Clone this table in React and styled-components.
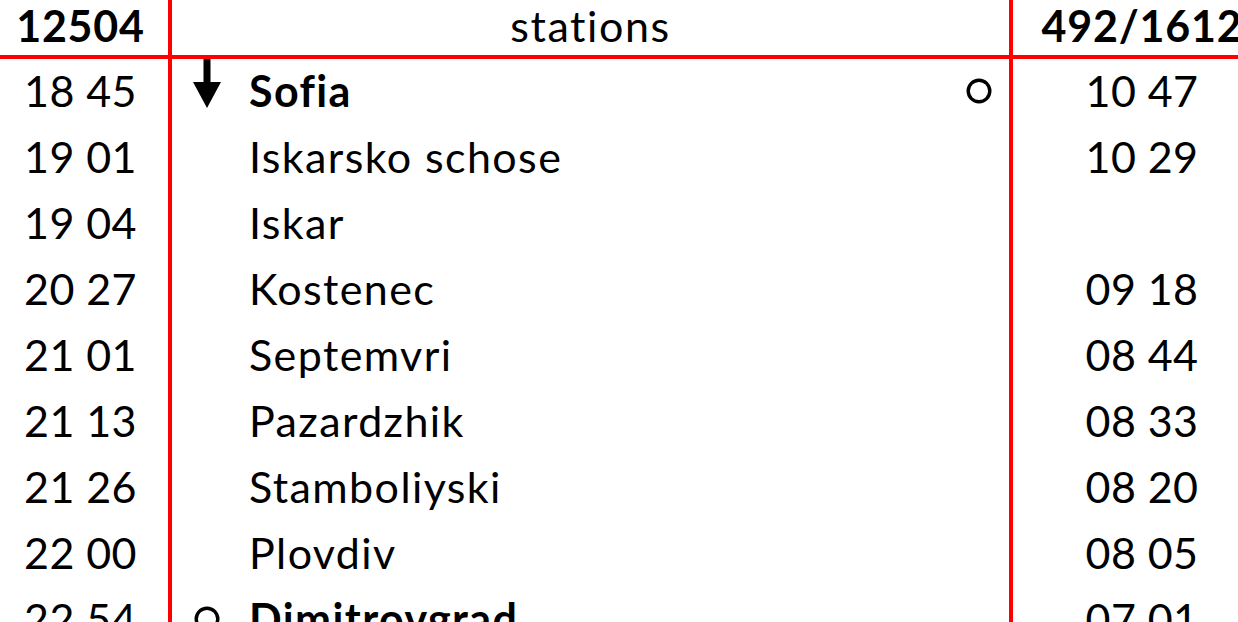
import React from 'react';
import styled, { createGlobalStyle } from 'styled-components';

const GlobalStyle = createGlobalStyle`
  html, body { margin: 0; padding: 0; background: #fff; }
  body {
    font-family: Lato, "Liberation Sans", sans-serif;
    color: #000;
    overflow: hidden;
    font-variant-ligatures: none;
  }
`;

const RED = '#ff0000';

const Table = styled.div`
  display: grid;
  grid-template-columns: 172px 841px 258px;
  width: 1271px;
`;

const Cell = styled.div`
  display: flex;
  align-items: center;
  justify-content: center;
  height: ${({ $head }) => ($head ? '55px' : '66px')};
  padding-bottom: ${({ $head }) => ($head ? '0' : '3px')};
  box-sizing: border-box;
  font-size: 43px;
  font-weight: ${({ $bold }) => ($bold ? 700 : 400)};
  letter-spacing: ${({ $spacing }) => $spacing || '0.4px'};
  border-right: ${({ $line }) => ($line ? `4px solid ${RED}` : 'none')};
  white-space: nowrap;
`;

const HeadCell = styled(Cell)`
  height: 59px;
  padding-bottom: 4px;
  border-bottom: 4px solid ${RED};
`;

const TimeCell = styled(Cell)`
  padding-right: 7px;
`;

const HeadTime = styled(HeadCell)`
  padding-right: 7px;
`;

const StationCell = styled(Cell)`
  display: grid;
  grid-template-columns: 70px 7px 1fr 30px;
  align-items: center;
  padding-right: 17px;
`;

const Marker = styled.span`
  display: flex;
  justify-content: center;
  align-items: center;
  align-self: ${({ $top }) => ($top ? 'start' : 'center')};
`;

const Name = styled.span`
  grid-column: 3;
  font-weight: ${({ $bold }) => ($bold ? 700 : 400)};
  letter-spacing: 1.4px;
`;

const EndMark = styled.span`
  grid-column: 4;
  display: flex;
  justify-content: flex-end;
`;

const Arrow = () => (
  <svg width="28" height="49" viewBox="0 0 28 49">
    <rect x="10.5" y="0" width="7" height="26" fill="#000" />
    <polygon points="0,23 28,23 14,49" fill="#000" />
  </svg>
);

const Ring = () => (
  <svg width="26" height="26" viewBox="0 0 26 26">
    <circle cx="13" cy="13" r="10.8" fill="none" stroke="#000" strokeWidth="3.4" />
  </svg>
);

const rows = [
  { dep: '18 45', name: 'Sofia', bold: true, start: 'arrow', end: true, back: '10 47' },
  { dep: '19 01', name: 'Iskarsko schose', back: '10 29' },
  { dep: '19 04', name: 'Iskar', back: '' },
  { dep: '20 27', name: 'Kostenec', back: '09 18' },
  { dep: '21 01', name: 'Septemvri', back: '08 44' },
  { dep: '21 13', name: 'Pazardzhik', back: '08 33' },
  { dep: '21 26', name: 'Stamboliyski', back: '08 20' },
  { dep: '22 00', name: 'Plovdiv', back: '08 05' },
  { dep: '22 54', name: 'Dimitrovgrad', bold: true, start: 'ring', back: '07 01' },
];

export default function App() {
  return (
    <>
      <GlobalStyle />
      <Table>
        <HeadTime $bold $line $spacing="0.8px">12504</HeadTime>
        <HeadCell $line $spacing="1.6px">stations</HeadCell>
        <HeadCell $bold $spacing="0.8px">492/1612</HeadCell>

        {rows.map((r) => (
          <React.Fragment key={r.dep}>
            <TimeCell $line>{r.dep}</TimeCell>
            <StationCell $line>
              <Marker $top={r.start === 'arrow'}>
                {r.start === 'arrow' && <Arrow />}
                {r.start === 'ring' && <Ring />}
              </Marker>
              <Name $bold={r.bold}>{r.name}</Name>
              <EndMark>{r.end && <Ring />}</EndMark>
            </StationCell>
            <Cell>{r.back}</Cell>
          </React.Fragment>
        ))}
      </Table>
    </>
  );
}
